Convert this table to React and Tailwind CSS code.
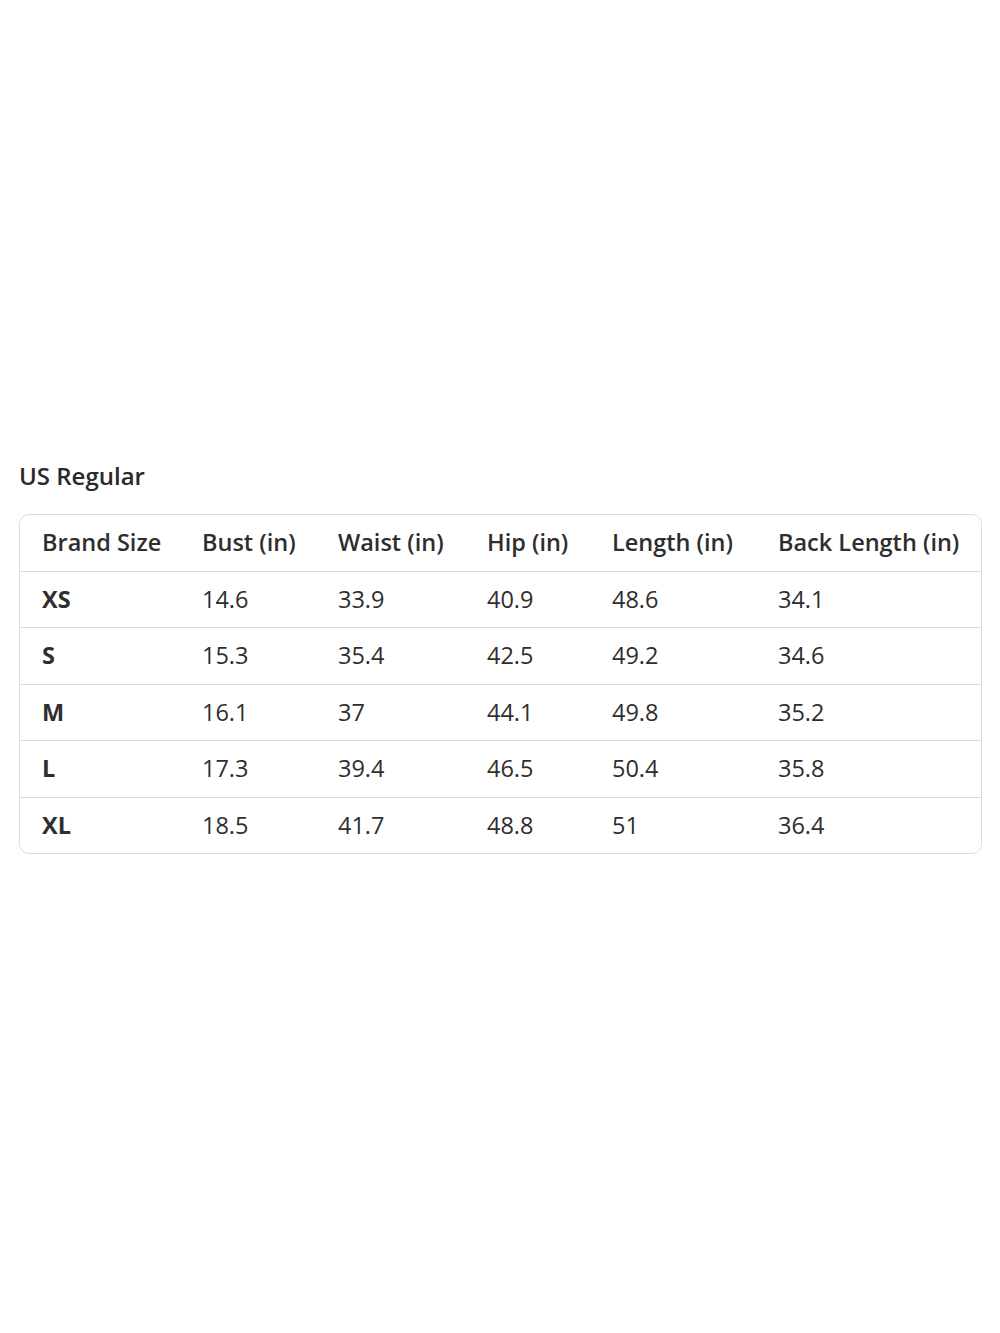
const columns = ['Brand Size', 'Bust (in)', 'Waist (in)', 'Hip (in)', 'Length (in)', 'Back Length (in)'];

const rows = [
  ['XS', '14.6', '33.9', '40.9', '48.6', '34.1'],
  ['S', '15.3', '35.4', '42.5', '49.2', '34.6'],
  ['M', '16.1', '37', '44.1', '49.8', '35.2'],
  ['L', '17.3', '39.4', '46.5', '50.4', '35.8'],
  ['XL', '18.5', '41.7', '48.8', '51', '36.4'],
];

const grid = 'grid grid-cols-[160px_136px_149px_125px_166px_1fr] items-center';

export default function App() {
  return (
    <div className="min-h-[1333px] w-[1000px] bg-white text-[#2e2e2e] font-['Open_Sans',sans-serif]">
      <div className="pt-[459px] pl-[19px] pr-[18px]">
        <h2 className="text-[24px] font-semibold leading-[34px] text-[#2a2a2a]">US Regular</h2>
        <div className="mt-[21px] rounded-[10px] border border-[#dcdcdc] overflow-hidden">
          <div className={`${grid} h-[56px] pl-[22px] text-[23.5px] font-semibold`}>
            {columns.map((c) => (
              <div key={c}>{c}</div>
            ))}
          </div>
          {rows.map((r) => (
            <div key={r[0]} className={`${grid} h-[56.4px] pl-[22px] border-t border-[#dcdcdc] text-[23.5px]`}>
              {r.map((v, i) => (
                <div key={i} className={i === 0 ? 'font-bold' : ''}>{v}</div>
              ))}
            </div>
          ))}
        </div>
      </div>
    </div>
  );
}
